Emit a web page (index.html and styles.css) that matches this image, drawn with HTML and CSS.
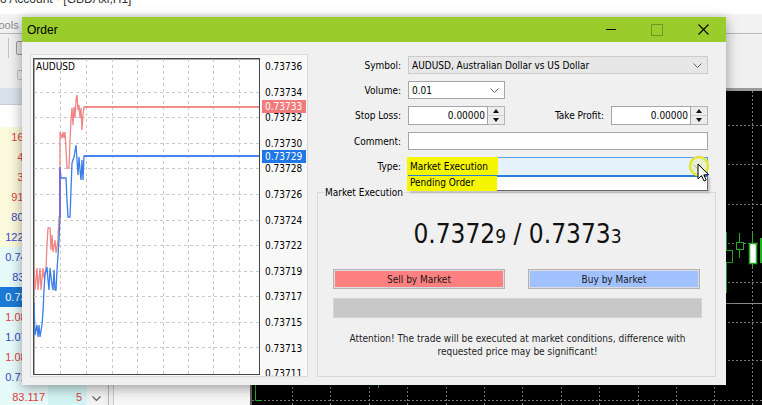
FILE: index.html
```html
<!DOCTYPE html>
<html>
<head>
<meta charset="utf-8">
<title>Order</title>
<link rel="stylesheet" href="styles.css">
</head>
<body>
<div class="desktop">
  <div class="caption"><span>o Account - [GBDAxi,H1]</span></div>
  <div class="menubar"><span class="menu-item">Tools</span></div>
  <div class="toolbars">
    <div class="toolbar"><i class="tb-sep"></i><i class="tb-icon"></i></div>
    <div class="toolbar"><i class="tb-icon dotted"></i></div>
  </div>
  <div class="workspace">
    <div class="market-watch">
      <div class="mw-head"></div>
      <div class="mw-blank"></div>
      <div class="mw-row yel"><span class="c1 red">1638.2</span><span class="c2 red">8</span></div>
      <div class="mw-row yel"><span class="c1 red">42.51</span><span class="c2 red">3</span></div>
      <div class="mw-row yel"><span class="c1 red">31.47</span><span class="c2 red">2</span></div>
      <div class="mw-row yel"><span class="c1 red">912.45</span><span class="c2 red">4</span></div>
      <div class="mw-row yel"><span class="c1 blue">803.12</span><span class="c2 blue">6</span></div>
      <div class="mw-row yel"><span class="c1 blue">1224.56</span><span class="c2 blue">7</span></div>
      <div class="mw-row cyan"><span class="c1 blue">0.74215</span><span class="c2 blue">3</span></div>
      <div class="mw-row cyan"><span class="c1 blue">83.116</span><span class="c2 blue">4</span></div>
      <div class="mw-row sel"><span class="c1">0.73729</span><span class="c2">4</span></div>
      <div class="mw-row cyan"><span class="c1 red">1.08762</span><span class="c2 red">2</span></div>
      <div class="mw-row cyan"><span class="c1 blue">1.07345</span><span class="c2 blue">3</span></div>
      <div class="mw-row cyan"><span class="c1 red">1.08123</span><span class="c2 red">5</span></div>
      <div class="mw-row cyan"><span class="c1 blue">0.71234</span><span class="c2 blue">6</span></div>
      <div class="mw-row cyan"><span class="c1 red">83.117</span><span class="c2 red">5</span></div>
    </div>
    <div class="mw-scroll"><svg class="scroll-chev" width="9" height="6" viewBox="0 0 9 6"><polyline points="0.5,0.5 4.5,4.5 8.5,0.5" fill="none" stroke="#606060" stroke-width="1.2"/></svg></div>
    <div class="splitter"></div>
    <div class="navigator"></div>
    <div class="main-chart">
      <svg width="512" height="317" viewBox="0 0 512 317">
        <rect x="0" y="0" width="512" height="317" fill="#000"/>
        <g stroke="#7a7a7a" stroke-width="1" stroke-dasharray="2 2">
          <line x1="42.5" y1="3" x2="42.5" y2="317"/>
          <line x1="80.5" y1="3" x2="80.5" y2="317"/>
          <line x1="119.5" y1="3" x2="119.5" y2="317"/>
          <line x1="157.5" y1="3" x2="157.5" y2="317"/>
          <line x1="196.5" y1="3" x2="196.5" y2="317"/>
          <line x1="234.5" y1="3" x2="234.5" y2="317"/>
          <line x1="272.5" y1="3" x2="272.5" y2="317"/>
          <line x1="311.5" y1="3" x2="311.5" y2="317"/>
          <line x1="349.5" y1="3" x2="349.5" y2="317"/>
          <line x1="388.5" y1="3" x2="388.5" y2="317"/>
          <line x1="426.5" y1="3" x2="426.5" y2="317"/>
          <line x1="464.5" y1="3" x2="464.5" y2="317"/>
          <line x1="502.5" y1="3" x2="502.5" y2="317"/>
          <line x1="2" y1="37.5" x2="512" y2="37.5"/>
          <line x1="2" y1="76.5" x2="512" y2="76.5"/>
          <line x1="2" y1="116.5" x2="512" y2="116.5"/>
          <line x1="2" y1="155.5" x2="512" y2="155.5"/>
          <line x1="2" y1="194.5" x2="512" y2="194.5"/>
          <line x1="2" y1="234.5" x2="512" y2="234.5"/>
          <line x1="2" y1="272.5" x2="512" y2="272.5"/>
          <line x1="2" y1="312.5" x2="512" y2="312.5"/>
        </g>
        <line x1="2" y1="215.5" x2="512" y2="215.5" stroke="#8c8c8c" stroke-width="1"/>
        <rect x="0" y="0" width="512" height="3" fill="#9a9a9a"/>
        <rect x="0" y="0" width="2" height="317" fill="#5a5a5a"/>
        <g stroke="#22b022" stroke-width="1" fill="none">
          <polyline points="5.5,250 5.5,312.5 12,312.5"/>
          <line x1="128.5" y1="297" x2="128.5" y2="300"/>
          <line x1="476.5" y1="144" x2="476.5" y2="205"/>
          <rect x="470.5" y="162.5" width="12" height="12" fill="#000"/>
          <line x1="489.5" y1="145" x2="489.5" y2="170"/>
          <rect x="486.5" y="154.5" width="7" height="7" fill="#000"/>
          <line x1="502.5" y1="145" x2="502.5" y2="179"/>
          <rect x="499.5" y="155.5" width="7" height="20" fill="#fff" stroke-width="1.5"/>
          <rect x="510.5" y="150.5" width="6" height="24" fill="#22b022"/>
        </g>
      </svg>
    </div>
  </div>

  <div class="dialog">
    <div class="titlebar">
      <span class="title">Order</span>
      <div class="win-btns">
        <span class="wb wb-min"></span>
        <span class="wb wb-max"></span>
        <span class="wb wb-close"><svg width="11" height="11" viewBox="0 0 11 11"><path d="M0.5 0.5 L10.5 10.5 M10.5 0.5 L0.5 10.5" stroke="#000" stroke-width="1.1"/></svg></span>
      </div>
    </div>
    <div class="dlg-body">
      <div class="chart-panel">
        <div class="plot">
          <svg class="plot-svg" width="225" height="315" viewBox="0 0 225 315">
            <g stroke="#c9c9c9" stroke-width="1" stroke-dasharray="3 3">
              <line x1="26.5" y1="0" x2="26.5" y2="315"/>
              <line x1="52.5" y1="0" x2="52.5" y2="315"/>
              <line x1="78.5" y1="0" x2="78.5" y2="315"/>
              <line x1="103.5" y1="0" x2="103.5" y2="315"/>
              <line x1="129.5" y1="0" x2="129.5" y2="315"/>
              <line x1="154.5" y1="0" x2="154.5" y2="315"/>
              <line x1="179.5" y1="0" x2="179.5" y2="315"/>
              <line x1="205.5" y1="0" x2="205.5" y2="315"/>
              <line x1="0" y1="33.5" x2="225" y2="33.5"/>
              <line x1="0" y1="58.5" x2="225" y2="58.5"/>
              <line x1="0" y1="84.5" x2="225" y2="84.5"/>
              <line x1="0" y1="109.5" x2="225" y2="109.5"/>
              <line x1="0" y1="135.5" x2="225" y2="135.5"/>
              <line x1="0" y1="161.5" x2="225" y2="161.5"/>
              <line x1="0" y1="186.5" x2="225" y2="186.5"/>
              <line x1="0" y1="212.5" x2="225" y2="212.5"/>
              <line x1="0" y1="237.5" x2="225" y2="237.5"/>
              <line x1="0" y1="263.5" x2="225" y2="263.5"/>
              <line x1="0" y1="288.5" x2="225" y2="288.5"/>
            </g>
            <polyline fill="none" stroke="#f08585" stroke-width="1.3" points="0,209 1,231 3,209 4,231 6,209 7,231 9,209 10,219 12,209 13,186 14,169 16,169 17,191 18,176 19,193 21,181 22,194 24,181 25,158 26,158 26,73 28,79 29,73 30,79 31,73 32,91 33,109 35,109 36,81 37,61 38,49 39,66 40,48 41,59 42,41 43,36 44,51 45,46 46,59 47,49 48,71 49,56 50,48 226,48"/>
            <line x1="50" y1="48" x2="226" y2="48" stroke="#f08585" stroke-width="1.6"/>
            <polyline fill="none" stroke="#3b7ee8" stroke-width="1.3" points="0,243 1,276 3,266 4,278 5,266 6,278 8,266 9,253 10,231 11,216 13,208 14,221 15,231 16,209 18,226 19,231 20,211 21,231 22,231 23,211 24,196 25,181 26,158 26,108 27,119 32,119 33,141 34,158 36,158 37,131 38,104 40,98 42,86 43,101 44,116 45,98 46,111 47,121 48,101 49,121 50,97 226,97"/>
            <line x1="50" y1="97" x2="226" y2="97" stroke="#3b7ee8" stroke-width="1.6"/>
            <line x1="26" y1="158" x2="26" y2="110" stroke="#8a5bd6" stroke-width="1.4"/>
          </svg>
          <span class="plot-sym">AUDUSD</span>
        </div>
        <div class="axis">
          <span>0.73736</span><span>0.73734</span><span>0.73732</span><span>0.73730</span>
          <span>0.73728</span><span>0.73726</span><span>0.73724</span><span>0.73722</span>
          <span>0.73719</span><span>0.73717</span><span>0.73715</span><span>0.73713</span>
          <span>0.73711</span>
          <b class="tag tag-ask">0.73733</b>
          <b class="tag tag-bid">0.73729</b>
        </div>
      </div>

      <div class="order-side">
        <div class="form">
          <label class="lbl">Symbol:</label>
          <div class="field combo disabled wide"><span class="val">AUDUSD, Australian Dollar vs US Dollar</span><svg class="chev" width="9" height="5" viewBox="0 0 9 5"><polyline points="0.5,0.5 4.5,4.5 8.5,0.5" fill="none" stroke="#606060"/></svg></div>

          <label class="lbl">Volume:</label>
          <div class="field combo"><span class="val">0.01</span><svg class="chev" width="9" height="5" viewBox="0 0 9 5"><polyline points="0.5,0.5 4.5,4.5 8.5,0.5" fill="none" stroke="#606060"/></svg></div>
          <div class="filler"></div>

          <label class="lbl">Stop Loss:</label>
          <div class="spin"><span class="spin-field">0.00000</span><span class="spin-btns"><i class="up"></i><i class="down"></i></span></div>
          <label class="lbl">Take Profit:</label>
          <div class="spin"><span class="spin-field">0.00000</span><span class="spin-btns"><i class="up"></i><i class="down"></i></span></div>

          <label class="lbl">Comment:</label>
          <div class="field textbox wide"></div>

          <label class="lbl">Type:</label>
          <div class="field combo active wide">
            <span class="mark">Market Execution</span>
            <svg class="chev" width="9" height="5" viewBox="0 0 9 5"><polyline points="0.5,0.5 4.5,4.5 8.5,0.5" fill="none" stroke="#606060"/></svg>
            <div class="droplist"><span class="mark">Pending Order</span></div>
          </div>
        </div>

        <fieldset class="group">
          <legend>Market Execution</legend>
          <div class="group-inner">
            <div class="quote">0.7372<small>9</small> / 0.7373<small>3</small></div>
            <div class="trade-btns">
              <button class="tbtn sell">Sell by Market</button>
              <button class="tbtn buy">Buy by Market</button>
            </div>
            <div class="progress"></div>
            <p class="note">Attention! The trade will be executed at market conditions, difference with<br>requested price may be significant!</p>
          </div>
        </fieldset>
      </div>
    </div>

    <svg class="cursor" width="26" height="32" viewBox="0 0 26 32">
      <circle cx="11" cy="10" r="9" fill="rgba(240,240,90,0.25)" stroke="#e4e43c" stroke-width="2.6"/>
      <path d="M10 8 L10 23 L13.5 19.6 L16 25 L18.2 24 L15.8 18.8 L20.6 18.8 Z" fill="#fff" stroke="#000" stroke-width="1" stroke-linejoin="round"/>
    </svg>
  </div>
</div>
</body>
</html>
```

FILE: styles.css
```css
* { box-sizing: border-box; }
html, body { margin: 0; padding: 0; }
body {
  width: 762px;
  height: 405px;
  overflow: hidden;
  background: #f0f0f0;
  font-family: "Liberation Sans", Arial, sans-serif;
  font-size: 11px;
  color: #000;
}

.desktop {
  position: relative;
  width: 762px;
  height: 405px;
  overflow: hidden;
  display: flex;
  flex-direction: column;
}

/* ---------- background terminal ---------- */
.caption {
  flex: none;
  height: 14px;
  background: #fff;
  overflow: hidden;
}
.caption span {
  display: block;
  font-size: 12px;
  line-height: 12px;
  margin-top: -7px;
  color: #333;
  white-space: nowrap;
}

.menubar {
  flex: none;
  height: 20px;
  background: #f2f2f2;
  border-bottom: 1px solid #b9b9b9;
  overflow: hidden;
  display: flex;
  align-items: center;
  padding-top: 3px;
}
.menu-item {
  margin-left: -7px;
  color: #8a8a8a;
  font-size: 11px;
}

.toolbars {
  flex: none;
  height: 54px;
  background: #f0f0f0;
  display: flex;
  flex-direction: column;
}
.toolbar {
  height: 27px;
  display: flex;
  align-items: center;
  gap: 7px;
  padding-left: 8px;
}
.tb-sep {
  width: 1px;
  height: 20px;
  background: #c4c4c4;
}
.tb-icon {
  width: 8px;
  height: 14px;
  border: 1px solid #9a9a9a;
  border-radius: 2px;
  background: #e4e4e4;
}
.tb-icon.dotted {
  margin-left: 9px;
  border-style: dotted;
  background: none;
  height: 10px;
}

.workspace {
  flex: 1;
  display: grid;
  grid-template-columns: 87px 18px 9px 136px 512px;
  overflow: hidden;
}

.market-watch {
  background: #fff;
  display: flex;
  flex-direction: column;
}
.mw-head {
  height: 17px;
  background: #d9e2ec;
  border-bottom: 1px solid #c5ced8;
}
.mw-blank { height: 22px; background: #fff; }
.mw-row {
  height: 20px;
  display: grid;
  grid-template-columns: 48px 39px;
  align-items: center;
}
.mw-row .c1, .mw-row .c2 {
  height: 20px;
  line-height: 20px;
  text-align: right;
  padding-right: 3px;
  font-size: 11px;
}
.mw-row .c2 { padding-right: 5px; }
.mw-row.yel .c1 { background: #fbf9dc; }
.mw-row.yel .c2 { background: #f5f1c4; }
.mw-row.cyan .c1 { background: #e6fafa; }
.mw-row.cyan .c2 { background: #d2f4f4; }
.mw-row.sel .c1, .mw-row.sel .c2 { background: #1a7ad6; color: #fff; }
.red { color: #e23c3c; }
.blue { color: #3346c4; }

.mw-scroll {
  background: #f3f3f3;
  display: flex;
  flex-direction: column;
  justify-content: flex-end;
  align-items: center;
  padding-bottom: 5px;
}
.splitter {
  background: #f0f0f0;
  border-left: 1px solid #b4b4b4;
  border-right: 1px solid #c8c8c8;
  margin-left: 3px;
}
.navigator { background: #f7f7f7; }
.main-chart { background: #000; overflow: hidden; }
.main-chart svg { display: block; }

/* ---------- order dialog ---------- */
.dialog {
  position: absolute;
  left: 22px;
  top: 17px;
  width: 704px;
  height: 368px;
  background: #f0f0f0;
  box-shadow: 0 3px 12px rgba(0, 0, 0, 0.38);
  display: flex;
  flex-direction: column;
  font-family: "DejaVu Sans Condensed", "DejaVu Sans", sans-serif;
  font-stretch: semi-condensed;
  font-size: 10px;
}
.titlebar {
  flex: none;
  height: 25px;
  background: #9acd2b;
  display: flex;
  align-items: center;
}
.title {
  padding-left: 5px;
  font-family: "Liberation Sans", Arial, sans-serif;
  font-size: 12px;
  color: #000;
}
.win-btns {
  margin-left: auto;
  display: flex;
  height: 100%;
}
.wb {
  width: 46px;
  height: 25px;
  position: relative;
  display: flex;
  align-items: center;
  justify-content: center;
}
.wb-min::before {
  content: "";
  width: 10px;
  height: 1px;
  background: #000;
}
.wb-max::before {
  content: "";
  width: 10px;
  height: 10px;
  border: 1px solid #6f9a22;
}

.dlg-body {
  flex: 1;
  display: flex;
  gap: 9px;
  padding: 12px 10px 8px 8px;
  min-height: 0;
}

.chart-panel {
  flex: none;
  width: 278px;
  background: #f8f8f8;
  border: 1px solid #dadada;
  padding: 3px 0 0 2px;
  display: flex;
  overflow: hidden;
}
.plot {
  flex: none;
  position: relative;
  width: 227px;
  height: 317px;
  background: #fff;
  border: 1px solid #474747;
  box-shadow: inset 1px 1px 0 #a8a8a8;
}
.plot-svg { position: absolute; left: 0; top: 0; display: block; }
.plot-sym {
  position: absolute;
  left: 2px;
  top: 2px;
  font-size: 10px;
  color: #000;
}
.axis {
  position: relative;
  flex: 1;
  display: flex;
  flex-direction: column;
  margin-top: -4px;
  padding-left: 5px;
}
.axis span {
  flex: none;
  height: 25.6px;
  line-height: 25.6px;
  font-size: 10px;
  color: #000;
}
.tag {
  position: absolute;
  left: 2px;
  width: 44px;
  height: 13px;
  line-height: 13px;
  padding-left: 3px;
  font-weight: normal;
  font-size: 10px;
  color: #fff;
}
.tag-ask { top: 46px; background: #f27a7a; }
.tag-bid { top: 96px; background: #1f78e6; }

.order-side {
  flex: 1;
  display: flex;
  flex-direction: column;
  min-width: 0;
}
.form {
  display: grid;
  grid-template-columns: 84px 97px 92px 97px;
  grid-template-rows: 18px 18px 19px 18px 19px;
  column-gap: 7px;
  row-gap: 7px;
  margin-top: 2px;
}
.lbl {
  justify-self: end;
  align-self: center;
  color: #000;
  white-space: nowrap;
}
.wide { grid-column: 2 / 5; }
.filler { grid-column: 3 / 5; }

.field {
  position: relative;
  display: flex;
  align-items: center;
  background: #fff;
  border: 1px solid #a6a6a6;
  padding: 0 3px;
}
.field .val { white-space: nowrap; }
.combo .chev { margin-left: auto; margin-right: 2px; }
.combo.disabled { background: #e7e7e7; border-color: #cbcbcb; }
.combo.active {
  background: #e5f1fb;
  border-color: #5aa0e6;
  padding-left: 0;
}
.mark {
  display: inline-block;
  background: #f6f600;
  padding: 0 4px 0 3px;
  line-height: 17px;
  white-space: nowrap;
}
.combo.active > .mark {
  margin-left: -2px;
  width: 91px;
  height: 19px;
  line-height: 19px;
  margin-top: -1px;
  margin-bottom: -1px;
}
.combo.active .chev { opacity: 0.5; }

.droplist {
  position: absolute;
  left: -1px;
  right: -1px;
  top: 100%;
  height: 16px;
  background: #fff;
  border: 1px solid #6a6a6a;
  border-top: 2px solid #2a7fd4;
  box-shadow: 2px 2px 2px rgba(0, 0, 0, 0.18);
}
.droplist .mark {
  margin-left: -2px;
  width: 90px;
  height: 15px;
  line-height: 14px;
  margin-top: -1px;
}

.spin { display: flex; }
.spin-field {
  flex: 1;
  background: #fff;
  border: 1px solid #a6a6a6;
  text-align: right;
  padding-right: 2px;
  line-height: 17px;
}
.spin-btns {
  flex: none;
  width: 17px;
  display: flex;
  flex-direction: column;
  background: #ececec;
  border: 1px solid #b5b5b5;
  border-left: none;
}
.spin-btns i {
  flex: 1;
  display: flex;
  align-items: center;
  justify-content: center;
}
.spin-btns i::before {
  content: "";
  width: 0;
  height: 0;
  border-left: 3.5px solid transparent;
  border-right: 3.5px solid transparent;
}
.spin-btns .up { border-bottom: 1px solid #cfcfcf; }
.spin-btns .up::before { border-bottom: 4px solid #111; }
.spin-btns .down::before { border-top: 4px solid #111; }

.textbox { border-color: #a6a6a6; }

.group {
  flex: 1;
  margin: 10px 0 0 0;
  padding: 0;
  border: 1px solid #d9d9d9;
  min-width: 0;
}
.group legend {
  margin-left: 6px;
  padding: 0 1px;
  font-size: 10px;
  line-height: 13px;
  color: #000;
}
.group-inner {
  padding: 0 13px 0 15px;
}
.quote {
  margin-top: 19px;
  text-align: center;
  font-size: 26px;
  line-height: 32px;
  color: #111;
  white-space: nowrap;
}
.quote small { font-size: 19px; }
.trade-btns {
  display: flex;
  gap: 23px;
  margin-top: 17px;
}
.tbtn {
  width: 172px;
  height: 20px;
  margin: 0;
  padding: 0;
  border: 1px solid #b3b3b3;
  box-shadow: inset 0 0 0 1px #dcdcdc;
  font-family: inherit;
  font-stretch: inherit;
  font-size: 10px;
  color: #1a1a1a;
}
.sell { background: #ff8080; }
.buy { background: #a0c0ff; }
.progress {
  margin-top: 9px;
  height: 20px;
  width: 369px;
  background: #c8c8c8;
  border: 1px solid #d4d4d4;
}
.note {
  margin: 14px 0 0 0;
  text-align: center;
  line-height: 13px;
  color: #1e1e1e;
}

.cursor {
  position: absolute;
  left: 666px;
  top: 139px;
  overflow: visible;
}
```
